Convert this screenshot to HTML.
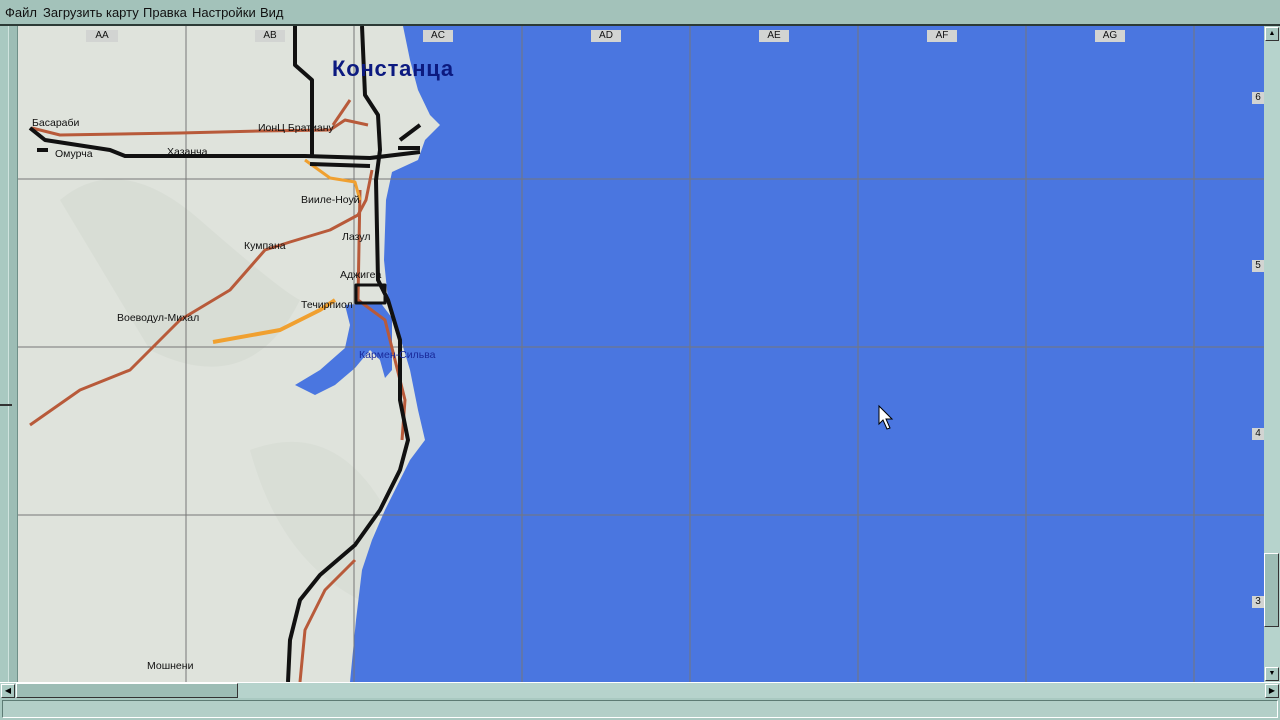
<!DOCTYPE html>
<html><head><meta charset="utf-8"><style>
html,body{margin:0;padding:0;width:1280px;height:720px;overflow:hidden;background:#a9c9c1;font-family:"Liberation Sans","DejaVu Sans",sans-serif}
#menu{position:absolute;left:0;top:0;width:1280px;height:24px;background:#a3c2ba;border-bottom:2px solid #2c3a36;font-size:13px;color:#111}
#menu span{position:absolute;top:5px}
#left{position:absolute;left:0;top:26px;width:18px;height:656px;background:#a9c9c1}
#left div{position:absolute;left:8px;top:0;width:8px;height:656px;background:#9dbdb5;border-left:1px solid #cfe3de;border-right:1px solid #6f8f88}
#vs{position:absolute;left:1264px;top:26px;width:16px;height:656px;background:#b6d3cc}
#hs{position:absolute;left:0;top:682px;width:1280px;height:16px;background:#b6d3cc;border-top:1px solid #fff}
#status{position:absolute;left:0;top:698px;width:1280px;height:22px;background:#a9c9c1}
#status div{position:absolute;left:2px;top:2px;right:2px;bottom:2px;border:1px solid #5d7b74;border-right-color:#fff;border-bottom-color:#fff;background:#b3cfc8}
.btn{position:absolute;width:14px;height:14px;background:#a9c9c1;border:1px solid #fff;border-right-color:#333;border-bottom-color:#333;box-sizing:border-box}
.lab{position:absolute;background:#d2d4d2;font-size:10px;color:#111;text-align:center;height:12px;line-height:12px}
</style></head><body>
<div id="menu"><span style="left:5px">Файл</span><span style="left:43px">Загрузить карту</span><span style="left:143px">Правка</span><span style="left:192px">Настройки</span><span style="left:260px">Вид</span></div>
<div id="left"><div></div><div style="left:0;top:378px;width:12px;height:2px;background:#333;border:0"></div></div>
<svg style="position:absolute;left:18px;top:26px" width="1246" height="656" viewBox="18 26 1246 656">
<rect x="18" y="26" width="1246" height="656" fill="#dfe3dc"/>
<path d="M60 200 Q120 150 200 220 T300 300 Q250 400 150 350 Z" fill="#d3d9d1" opacity=".6"/>
<path d="M250 450 Q330 420 380 500 L360 600 Q280 560 250 450Z" fill="#d5dbd3" opacity=".7"/>
<path d="M403 26 L410 60 L418 90 L430 115 L440 125 L425 140 L418 160 L392 172 L386 200 L384 260 L388 300 L398 330 L410 370 L418 410 L425 440 L410 460 L400 480 L385 510 L372 540 L362 570 L356 620 L350 682 L1264 682 L1264 26 Z" fill="#4a76e0"/>
<path d="M345 305 L380 302 L392 318 L392 370 L385 378 L380 360 L370 350 L355 368 L335 385 L315 395 L295 385 L320 370 L345 348 L350 325 Z" fill="#4a76e0"/>
<g stroke="#777" stroke-width="1">
<line x1="186" y1="26" x2="186" y2="682"/><line x1="354" y1="26" x2="354" y2="682"/><line x1="522" y1="26" x2="522" y2="682"/><line x1="690" y1="26" x2="690" y2="682"/><line x1="858" y1="26" x2="858" y2="682"/><line x1="1026" y1="26" x2="1026" y2="682"/><line x1="1194" y1="26" x2="1194" y2="682"/>
<line x1="18" y1="179" x2="1264" y2="179"/><line x1="18" y1="347" x2="1264" y2="347"/><line x1="18" y1="515" x2="1264" y2="515"/>
</g>
<g fill="none" stroke-linejoin="round">
<path d="M32 128 L60 135 L180 133 L260 131 L330 130 L345 120 L368 125" stroke="#b85a3a" stroke-width="3"/>
<path d="M350 100 L333 125" stroke="#b85a3a" stroke-width="3"/>
<path d="M372 170 L366 200 L358 215 L330 230 L290 242 L265 250 L230 290 L180 320 L130 370 L80 390 L30 425" stroke="#b85a3a" stroke-width="3"/>
<path d="M360 190 L358 300 L385 320 L405 400 L402 440" stroke="#b85a3a" stroke-width="3"/>
<path d="M355 560 L325 590 L305 630 L300 682" stroke="#b85a3a" stroke-width="3"/>
<path d="M305 160 L330 178 L355 182 L360 200" stroke="#f0a030" stroke-width="3"/>
<path d="M213 342 L280 330 L320 310 L335 300" stroke="#f0a030" stroke-width="4"/>
<path d="M30 128 L45 140 L110 150 L125 156 L305 156 L370 158 L420 152" stroke="#111" stroke-width="4"/>
<path d="M295 26 L295 65 L312 80 L312 156" stroke="#111" stroke-width="4"/>
<path d="M362 26 L365 95 L378 115 L380 150 L376 180 L378 280 L388 300 L400 340 L400 400 L408 440 L400 470 L380 510 L355 545 L320 575 L300 600 L290 640 L288 682" stroke="#111" stroke-width="4"/>
<path d="M310 164 L370 166" stroke="#111" stroke-width="4"/>
<path d="M400 140 L420 125 M398 148 L420 148" stroke="#111" stroke-width="4"/>
<path d="M356 285 L356 303 L385 303 L385 285 Z" stroke="#111" stroke-width="3"/>
<path d="M37 150 L48 150" stroke="#111" stroke-width="4"/>
</g>
<text x="332" y="76" font-family="Liberation Sans,DejaVu Sans,sans-serif" font-size="22" font-weight="bold" letter-spacing="0.8" fill="#0c1a80">Констанца</text>
<g font-family="Liberation Sans,DejaVu Sans,sans-serif" font-size="10.5" fill="#111">
<text x="32" y="126">Басараби</text><text x="55" y="157">Омурча</text><text x="167" y="155">Хазанча</text><text x="258" y="131">ИонЦ Братиану</text>
<text x="301" y="203">Вииле-Ноуй</text><text x="244" y="249">Кумпана</text><text x="342" y="240">Лазул</text><text x="340" y="278">Аджигеа</text>
<text x="301" y="308">Течирпиол</text><text x="117" y="321">Воеводул-Михал</text><text x="147" y="669">Мошнени</text>
<text x="359" y="358" fill="#1a2a9a">Кармен-Сильва</text>
</g>
<path d="M879 406 L879 424 L883 420 L887 429 L890 428 L886 419 L892 419 Z" fill="#fff" stroke="#000" stroke-width="1"/>
</svg>
<div class="lab" style="left:86px;top:30px;width:32px">AA</div>
<div class="lab" style="left:255px;top:30px;width:30px">AB</div>
<div class="lab" style="left:423px;top:30px;width:30px">AC</div>
<div class="lab" style="left:591px;top:30px;width:30px">AD</div>
<div class="lab" style="left:759px;top:30px;width:30px">AE</div>
<div class="lab" style="left:927px;top:30px;width:30px">AF</div>
<div class="lab" style="left:1095px;top:30px;width:30px">AG</div>
<div class="lab" style="left:1252px;top:92px;width:12px">6</div>
<div class="lab" style="left:1252px;top:260px;width:12px">5</div>
<div class="lab" style="left:1252px;top:428px;width:12px">4</div>
<div class="lab" style="left:1252px;top:596px;width:12px">3</div>
<div id="vs"><div class="btn" style="left:1px;top:1px;font-size:7px;text-align:center;line-height:12px">▲</div>
<div style="position:absolute;left:0;top:527px;width:15px;height:74px;background:#9dbdb5;border:1px solid #fff;border-right-color:#333;border-bottom-color:#333;box-sizing:border-box"></div>
<div class="btn" style="left:1px;top:641px;font-size:7px;text-align:center;line-height:12px">▼</div></div>
<div id="hs"><div class="btn" style="left:1px;top:1px;font-size:8px;text-align:center;line-height:12px">◀</div>
<div style="position:absolute;left:16px;top:0;width:222px;height:15px;background:#9dbdb5;border:1px solid #fff;border-right-color:#333;border-bottom-color:#333;box-sizing:border-box"></div>
<div class="btn" style="left:1265px;top:1px;font-size:8px;text-align:center;line-height:12px">▶</div></div>
<div id="status"><div></div></div>
</body></html>
